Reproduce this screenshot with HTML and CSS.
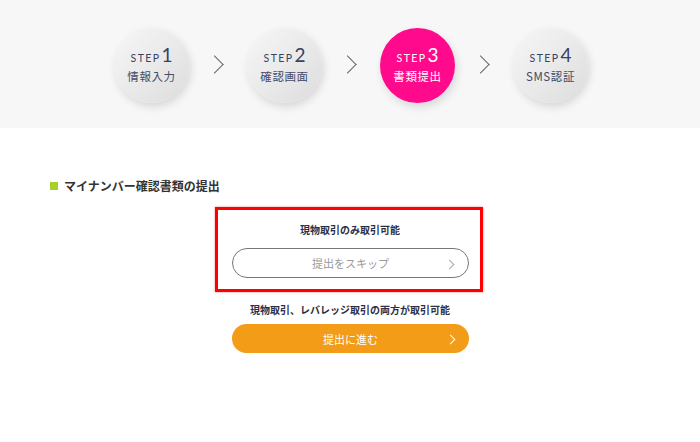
FILE: index.html
```html
<!DOCTYPE html>
<html lang="ja">
<head>
  <meta charset="UTF-8">
  <title>書類提出</title>
  <link rel="stylesheet" href="styles.css">
</head>
<body>

  <!-- ステップ表示 -->
  <div class="steps">
    <div class="step">
      <span class="step-no">STEP<b>1</b></span>
      <span class="step-name">情報入力</span>
    </div>
    <span class="step-arrow"></span>
    <div class="step">
      <span class="step-no">STEP<b>2</b></span>
      <span class="step-name">確認画面</span>
    </div>
    <span class="step-arrow"></span>
    <div class="step current">
      <span class="step-no">STEP<b>3</b></span>
      <span class="step-name">書類提出</span>
    </div>
    <span class="step-arrow"></span>
    <div class="step">
      <span class="step-no">STEP<b>4</b></span>
      <span class="step-name">SMS認証</span>
    </div>
  </div>

  <div class="content">
    <h2 class="title">マイナンバー確認書類の提出</h2>

    <div class="choice">
      <div class="notice">
        <p class="note">現物取引のみ取引可能</p>
        <a class="btn btn-skip" href="#">提出をスキップ</a>
      </div>

      <p class="note">現物取引、レバレッジ取引の両方が取引可能</p>
      <a class="btn btn-go" href="#">提出に進む</a>
    </div>
  </div>

</body>
</html>
```

FILE: styles.css
```css
body {
  margin: 0;
  background: #fff;
  color: #333;
  font-family: "Noto Sans CJK JP", "Noto Sans", sans-serif;
}

.steps {
  background: #f7f7f7;
  height: 128px;
  display: flex;
  align-items: center;
  justify-content: center;
  padding-left: 2px;
  box-sizing: border-box;
}
.step {
  width: 75px;
  height: 75px;
  border-radius: 50%;
  background: linear-gradient(135deg, #f6f6f6 0%, #e9e9e9 55%, #dcdcdc 100%);
  box-shadow: 2px 4px 8px rgba(0, 0, 0, 0.13);
  display: flex;
  flex-direction: column;
  align-items: center;
  justify-content: center;
  color: #3b4160;
  margin-top: 2px;
}
.step-no {
  font-family: "Lato", "Noto Sans", sans-serif;
  font-size: 10.5px;
  letter-spacing: 1.4px;
  line-height: 18px;
}
.step-no b {
  font-weight: 400;
  font-size: 19px;
  letter-spacing: 0;
  margin-left: 1px;
}
.step-name {
  font-size: 11.5px;
  line-height: 16px;
  letter-spacing: 0.6px;
  margin-top: 1px;
  color: #454a66;
}
.step.current {
  background: #ff0a8c;
  color: #fff;
}
.step.current .step-name {
  color: #fff;
}
.step-arrow {
  width: 12px;
  height: 12px;
  border-top: 1.5px solid #666;
  border-right: 1.5px solid #666;
  transform: rotate(45deg);
  margin: 0 26px 0 19px;
}

.content {
  padding: 50px 0 0 50px;
}
.title {
  margin: 0;
  font-size: 12px;
  font-weight: 700;
  color: #333;
  display: flex;
  align-items: center;
  line-height: 16px;
}
.title::before {
  content: "";
  width: 8px;
  height: 8px;
  background: #a4d22b;
  margin-right: 6px;
}

.choice {
  width: 268px;
  margin: 13px 0 0 165px;
  display: flex;
  flex-direction: column;
  align-items: center;
}
.notice {
  box-sizing: border-box;
  width: 268px;
  border: 3px solid #f00;
  box-shadow: 0 0 2px rgba(255, 0, 0, 0.5);
  padding: 12px 0 11px;
  display: flex;
  flex-direction: column;
  align-items: center;
}
.note {
  margin: 0 0 0 2px;
  font-size: 10px;
  font-weight: 700;
  color: #2b2f45;
  line-height: 16px;
}
.choice > .note {
  margin-top: 10px;
}

.btn {
  position: relative;
  box-sizing: border-box;
  width: 237px;
  height: 30px;
  margin: 10px 0 0 3px;
  border-radius: 15px;
  display: flex;
  align-items: center;
  justify-content: center;
  font-size: 11px;
  text-decoration: none;
}
.btn::after {
  content: "";
  position: absolute;
  right: 15px;
  top: 12px;
  width: 6px;
  height: 6px;
  border-top: 1px solid currentColor;
  border-right: 1px solid currentColor;
  transform: rotate(45deg);
}
.btn-skip {
  border: 1.5px solid #777;
  color: #999;
  background: #fff;
}
.btn-skip::after {
  border-color: #aaa;
}
.btn-go {
  margin-top: 6px;
  height: 29px;
  background: #f39c17;
  color: #fff;
}
```
